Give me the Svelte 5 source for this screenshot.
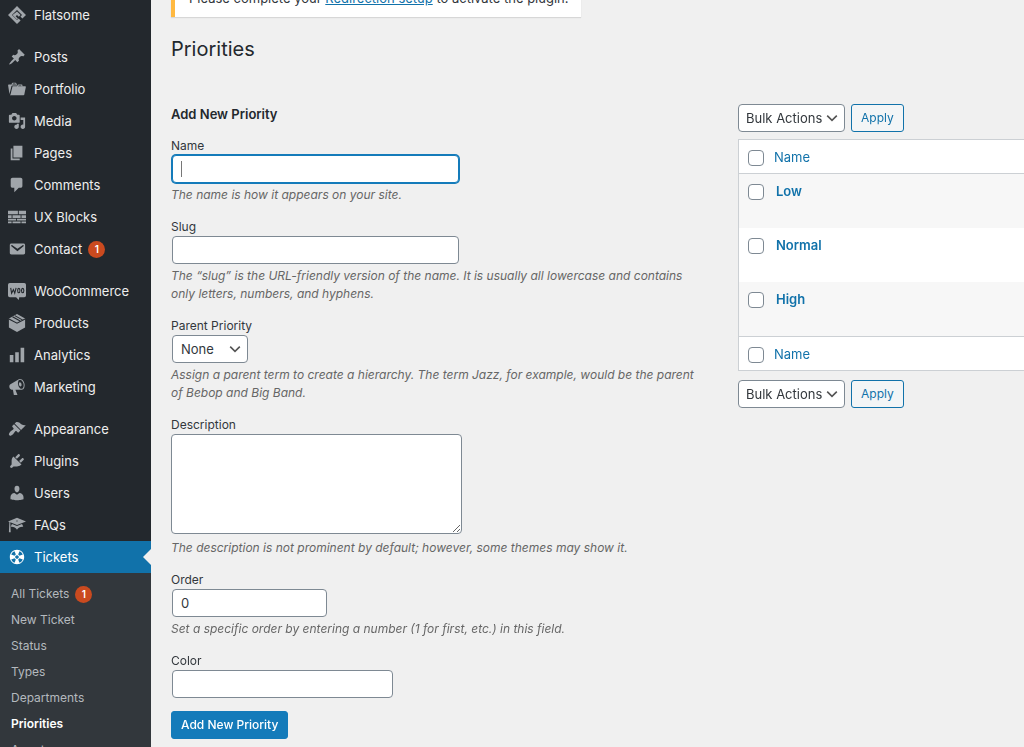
<script>
  import { onMount } from 'svelte'

  const groups = [
    [{ name: 'Flatsome', icon: 'flatsome' }],
    [
      { name: 'Posts', icon: 'pin' },
      { name: 'Portfolio', icon: 'portfolio' },
      { name: 'Media', icon: 'media' },
      { name: 'Pages', icon: 'pages' },
      { name: 'Comments', icon: 'comments' },
      { name: 'UX Blocks', icon: 'blocks' },
      { name: 'Contact', icon: 'email', count: 1 }
    ],
    [
      { name: 'WooCommerce', icon: 'woo' },
      { name: 'Products', icon: 'box' },
      { name: 'Analytics', icon: 'chart' },
      { name: 'Marketing', icon: 'megaphone' }
    ],
    [
      { name: 'Appearance', icon: 'brush' },
      { name: 'Plugins', icon: 'plug' },
      { name: 'Users', icon: 'user' },
      { name: 'FAQs', icon: 'learn' },
      { name: 'Tickets', icon: 'sos', current: true }
    ]
  ]

  const submenu = [
    { name: 'All Tickets', count: 1 },
    { name: 'New Ticket' },
    { name: 'Status' },
    { name: 'Types' },
    { name: 'Departments' },
    { name: 'Priorities', current: true },
    { name: 'Agents' }
  ]

  const icons = {
    flatsome: 'M10 0l10 10-4 4-2.2-2.2L15.6 10 10 4.4 4.4 10l5.6 5.6 1.800-1.800L14 16l-4 4L0 10zM10 6l4 4-2 2-2-2-1.500 1.500L11 14l-1 1-5-5z',
    pin: 'M10.440 3.020l1.820-1.820 6.360 6.350-1.830 1.820c-1.050-.68-2.480-.57-3.410.36l-.75.75c-.92.93-1.040 2.350-.35 3.410l-1.830 1.820-2.410-2.410-2.800 2.790c-.42.42-3.380 2.710-3.800 2.290s1.860-3.390 2.280-3.810l2.790-2.790L4.100 9.360l1.830-1.820c1.050.69 2.480.57 3.400-.36l.75-.75c.93-.92 1.050-2.350.36-3.410z',
    portfolio: 'M4 5H.78c-.37 0-.74.32-.69.84l1.560 9.990S3.500 8.470 3.860 6.700c.11-.53.61-.7.98-.7H10s-.7-2.080-.77-2.310C9.110 3.250 8.890 3 8.450 3H5.140c-.36 0-.7.23-.8.64C4.250 4.040 4 5 4 5zm4.880 0h-4s.42-1 .87-1h2.130c.48 0 1 1 1 1zM2.670 16.250c-.31.47-.76.75-1.260.75h15.730c.54 0 .92-.31 1.030-.83.44-2.190 1.680-8.440 1.680-8.440.07-.5-.3-.73-.62-.73H16V5.530c0-.16-.26-.53-.66-.53h-3.760c-.52 0-.87.58-.87.58L10 7H5.590c-.32 0-.63.19-.69.5 0 0-1.590 6.700-1.720 7.330-.07.37-.22.99-.51 1.420zM15.380 7H11s.58-1 1.130-1h2.290c.71 0 .96 1 .96 1z',
    media: 'M13 11V4c0-.55-.45-1-1-1h-1.670L9 1H5L3.670 3H2c-.55 0-1 .45-1 1v7c0 .55.45 1 1 1h10c.55 0 1-.45 1-1zM7 4.500c1.380 0 2.500 1.120 2.500 2.500S8.380 9.500 7 9.500 4.500 8.380 4.500 7 5.620 4.500 7 4.500zM14 6h5v10.500c0 1.380-1.120 2.500-2.500 2.500S14 17.880 14 16.500s1.120-2.500 2.500-2.500c.17 0 .34.02.5.05V9h-3V6zm-4 8.050V13h2v3.500c0 1.380-1.120 2.500-2.500 2.500S7 17.880 7 16.500 8.120 14 9.500 14c.17 0 .34.02.5.05z',
    pages: 'M6 15V2h10v13H6zm-1 1h8v2H3V5h2v11z',
    comments: 'M5 2h9c1.100 0 2 .9 2 2v7c0 1.100-.9 2-2 2h-2l-5 5v-5H5c-1.100 0-2-.9-2-2V4c0-1.100.9-2 2-2z',
    blocks: 'M0 3h11v4H0zM12 3h8v4h-8zM0 8h4v3H0zM5 8h9v3H5zM15 8h5v3h-5zM0 12h9v2H0zM10 12h10v2H10zM0 15h4v2H0zM5 15h9v2H5zM15 15h5v2h-5z',
    email: 'M3.870 4h13.250C18.370 4 19 4.590 19 5.790v8.420c0 1.190-.63 1.790-1.880 1.790H3.870c-1.250 0-1.880-.6-1.880-1.790V5.790c0-1.200.63-1.790 1.880-1.790zm6.620 8.600l6.740-5.530c.24-.2.43-.66.13-1.070-.29-.41-.82-.42-1.170-.17l-5.700 3.860L4.800 5.830c-.35-.25-.88-.24-1.170.17-.3.41-.11.87.13 1.070z',
    chart: 'M18 18V2h-4v16h4zm-6 0V7H8v11h4zm-6 0v-8H2v8h4z',
    megaphone: 'M18.150 5.940c.46 1.620.38 3.220-.02 4.480-.42 1.280-1.260 2.180-2.300 2.480-.16.06-.26.06-.4.06-.06.02-.12.02-.18.02-.06.02-.14.02-.22.02h-6.800l2.220 5.500c.02.14-.06.26-.14.34-.08.1-.24.16-.34.16H6.950c-.1 0-.26-.06-.34-.16-.08-.08-.16-.2-.14-.34l-1-5.500H4.250l-.02-.02c-.5.06-1.080-.18-1.540-.62s-.88-1.080-1.060-1.880c-.24-.8-.2-1.560-.02-2.200.18-.62.58-1.080 1.060-1.300l.02-.02 9-5.400c.1-.06.18-.1.24-.16.06-.04.14-.08.24-.12.16-.08.28-.12.5-.18 1.040-.3 2.240.1 3.220.98s1.840 2.240 2.260 3.860zm-2.580 5.980h-.02c.4-.1.74-.34 1.040-.7.58-.7.86-1.760.86-3.040 0-.64-.1-1.300-.28-1.980-.34-1.360-1.020-2.500-1.780-3.240s-1.680-1.100-2.460-.88c-.82.22-1.400.96-1.700 2-.32 1.040-.28 2.360.06 3.720.38 1.360 1 2.500 1.800 3.240.78.74 1.620 1.100 2.480.88zm-2.540-7.080c.22-.04.42-.02.62.04.38.16.76.48 1.020 1s.42 1.200.42 1.780c0 .3-.04.56-.12.8-.18.48-.44.84-.86.94-.34.1-.8-.06-1.140-.4s-.64-.86-.78-1.500c-.18-.62-.12-1.240.02-1.720s.48-.84.82-.94z',
    brush: 'M14.480 11.060L7.410 3.990l1.500-1.500c.5-.56 2.300-.47 3.510.32 1.210.8 1.430 1.280 2.910 2.100 1.180.64 2.450 1.260 4.450.85zm-.71.71L6.700 4.700 4.930 6.470c-.39.39-.39 1.020 0 1.410l1.060 1.060c.39.39.39 1.030 0 1.420-.6.6-1.430 1.110-2.210 1.690-.35.26-.7.53-1.010.84C1.430 14.230.4 16.080 1.400 17.070c.99 1 2.840-.03 4.180-1.360.31-.31.58-.66.85-1.020.57-.78 1.080-1.610 1.690-2.210.39-.39 1.020-.39 1.410 0l1.060 1.060c.39.39 1.020.39 1.410 0z',
    plug: 'M13.110 4.360L9.870 7.600 8 5.730l3.240-3.240c.35-.34 1.050-.2 1.560.32.52.51.66 1.210.31 1.550zm-8 1.770l.91-1.120 9.010 9.010-1.190.84c-.71.71-2.630 1.160-3.820 1.160H6.140L4.900 17.260c-.59.59-1.540.59-2.120 0-.59-.58-.59-1.530 0-2.120l1.240-1.240v-3.880c0-1.130.4-3.190 1.090-3.890zm7.260 3.970l3.240-3.240c.34-.35 1.040-.21 1.550.31.52.51.66 1.210.31 1.550l-3.240 3.250z',
    user: 'M10 9.250c-2.270 0-2.730-3.440-2.730-3.440C7 4.020 7.820 2 9.970 2c2.160 0 2.980 2.020 2.710 3.810 0 0-.41 3.440-2.680 3.440zm0 2.570L12.720 10c2.390 0 4.520 2.330 4.520 4.530v2.490s-3.650 1.130-7.240 1.130c-3.650 0-7.240-1.130-7.240-1.130v-2.490c0-2.250 1.940-4.480 4.470-4.480z',
    learn: 'M10 10L2.540 7.020 3 18H1l.48-11.410L0 6l10-4 10 4zm0-5c-.55 0-1 .22-1 .5s.45.5 1 .5 1-.22 1-.5-.45-.5-1-.5zm0 6l5.570-2.230c.71.94 1.200 2.070 1.360 3.300-.3-.04-.61-.07-.93-.07-2.550 0-4.780 1.370-6 3.410C8.780 13.370 6.550 12 4 12c-.32 0-.63.03-.93.07.16-1.230.65-2.360 1.360-3.300z',
    sos: 'M18 10c0-4.420-3.580-8-8-8s-8 3.580-8 8 3.580 8 8 8 8-3.580 8-8zM7.230 3.570L8.720 7.300c-.62.29-1.130.8-1.420 1.420L3.570 7.230c.71-1.640 2.020-2.950 3.660-3.660zm9.200 3.660L12.700 8.720c-.29-.62-.8-1.130-1.420-1.420l1.490-3.730c1.640.71 2.950 2.020 3.660 3.660zM10 12c-1.100 0-2-.9-2-2s.9-2 2-2 2 .9 2 2-.9 2-2 2zm-6.430.77l3.730-1.490c.29.62.8 1.130 1.420 1.420l-1.490 3.730c-1.640-.71-2.950-2.020-3.660-3.660zm9.200 3.660l-1.490-3.730c.62-.29 1.130-.8 1.420-1.420l3.730 1.490c-.71 1.640-2.020 2.950-3.660 3.660z'
  }

  const rows = ['Low', 'Normal', 'High']

  let nameInput

  onMount(() => nameInput.focus())
</script>

{#snippet bulkActions(position)}
  <div class="tablenav">
    <select aria-label="Bulk actions {position}">
      <option>Bulk Actions</option>
    </select>
    <button class="button">Apply</button>
  </div>
{/snippet}

<div class="admin">
  <nav class="menu">
    {#each groups as group}
      <ul class="group">
        {#each group as item}
          <li>
            <a class="item" class:current={item.current} href="#{item.icon}">
              <svg class="icon" viewBox="0 0 20 20" aria-hidden="true">
                {#if item.icon == 'woo'}
                  <path d="M2 1h16q2 0 2 2v12q0 2-2 2h-5.500l-.5 3-3-3H2q-2 0-2-2V3q0-2 2-2z" />
                  <path class="cut" d="M3 6.500l1 6 2-4 1.500 4 1.500-6" />
                  <ellipse class="cut" cx="12" cy="9.500" rx="1.300" ry="2.400" />
                  <ellipse class="cut" cx="16.300" cy="9.500" rx="1.300" ry="2.400" />
                {:else if item.icon == 'box'}
                  <path d="M10 0l9 5v10l-9 5-9-5V5z" />
                  <path class="cut" d="M1 5.500l9 4.700 9-4.700M5 3l8.500 4.800M7.500 1.800L16 6.500" />
                {:else}
                  <path fill-rule="evenodd" d={icons[item.icon]} />
                {/if}
              </svg>
              {item.name}
              {#if item.count}<span class="count">{item.count}</span>{/if}
            </a>
          </li>
        {/each}
      </ul>
    {/each}
    <ul class="submenu">
      {#each submenu as item}
        <li>
          <a class:current={item.current} href="#{item.name}">
            {item.name}
            {#if item.count}<span class="count">{item.count}</span>{/if}
          </a>
        </li>
      {/each}
    </ul>
  </nav>

  <main>
    <div class="notice">
      Please complete your <a href="#setup">Redirection setup</a> to activate the plugin.
    </div>
    <h1>Priorities</h1>

    <div class="columns">
      <form>
        <h2>Add New Priority</h2>
        <div class="field">
          <label for="name">Name</label>
          <input id="name" type="text" bind:this={nameInput} />
          <p>The name is how it appears on your site.</p>
        </div>
        <div class="field">
          <label for="slug">Slug</label>
          <input id="slug" type="text" />
          <p>The “slug” is the URL-friendly version of the name. It is usually all lowercase and contains only letters, numbers, and hyphens.</p>
        </div>
        <div class="field">
          <label for="parent">Parent Priority</label>
          <select id="parent">
            <option>None</option>
          </select>
          <p>Assign a parent term to create a hierarchy. The term Jazz, for example, would be the parent of Bebop and Big Band.</p>
        </div>
        <div class="field">
          <label for="description">Description</label>
          <textarea id="description"></textarea>
          <p>The description is not prominent by default; however, some themes may show it.</p>
        </div>
        <div class="field">
          <label for="order">Order</label>
          <input id="order" class="short" type="text" value="0" />
          <p>Set a specific order by entering a number (1 for first, etc.) in this field.</p>
        </div>
        <div class="field">
          <label for="color">Color</label>
          <input id="color" class="medium" type="text" />
        </div>
        <button class="button primary" type="button">Add New Priority</button>
      </form>

      <section class="list">
        {@render bulkActions('top')}
        <table>
          <thead>
            <tr>
              <td><input type="checkbox" aria-label="Select all" /></td>
              <th><a href="#sort">Name</a></th>
            </tr>
          </thead>
          <tbody>
            {#each rows as row}
              <tr>
                <td><input type="checkbox" aria-label="Select {row}" /></td>
                <th><a href="#{row}">{row}</a></th>
              </tr>
            {/each}
          </tbody>
          <tfoot>
            <tr>
              <td><input type="checkbox" aria-label="Select all" /></td>
              <th><a href="#sort">Name</a></th>
            </tr>
          </tfoot>
        </table>
        {@render bulkActions('bottom')}
      </section>
    </div>
  </main>
</div>

<style>
  :global(body) {
    background: #f0f0f0;
    color: #32373c;
    font: 13px/18px Inter, "Liberation Sans", sans-serif;
  }

  .admin {
    display: flex;
    height: 100vh;
    overflow: hidden;
  }

  a {
    color: #1172aa;
  }

  .menu {
    flex: 0 0 151px;
    background: #23282d;
    margin-top: -1px;
  }

  ul {
    list-style: none;
    margin: 0;
    padding: 0;
  }

  .group + .group {
    margin-top: 10px;
  }

  .item {
    display: flex;
    align-items: center;
    position: relative;
    height: 32px;
    padding-left: 8px;
    color: #eee;
    text-decoration: none;
  }

  .icon {
    width: 18px;
    height: 18px;
    margin-right: 8px;
    fill: #a0a5aa;
  }

  .cut {
    fill: none;
    stroke: #23282d;
    stroke-width: 1.2;
  }

  .item.current {
    background: #1172aa;
    color: #fff;
  }

  .item.current .icon {
    fill: #fff;
  }

  .item.current::after {
    content: "";
    position: absolute;
    right: 0;
    top: 8px;
    border: 8px solid transparent;
    border-left-width: 0;
    border-right-color: #f0f0f0;
  }

  .count {
    width: 17px;
    margin-left: 6px;
    border-radius: 9px;
    background: #ca4a1f;
    color: #fff;
    font-size: 10px;
    line-height: 17px;
    font-weight: 600;
    text-align: center;
  }

  .submenu {
    height: 100%;
    padding-top: 8px;
    background: #32373c;
  }

  .submenu a {
    display: flex;
    align-items: center;
    height: 26px;
    padding-left: 11px;
    color: #b4b9be;
    font-size: 12px;
    text-decoration: none;
  }

  .submenu .current {
    color: #fff;
    font-weight: 600;
  }

  main {
    flex: 1;
    min-width: 0;
    padding-left: 20px;
  }

  .notice {
    width: fit-content;
    margin-top: -20px;
    padding: 9px 12px 10px 14px;
    border-left: 4px solid #ffb941;
    background: #fff;
    box-shadow: 0 1px 1px rgba(0, 0, 0, .1);
  }

  h1 {
    margin: 18px 0 41px;
    color: #23282d;
    font-size: 20px;
    line-height: 28px;
    font-weight: 400;
  }

  .columns {
    display: flex;
  }

  form {
    flex: 0 1 527px;
    margin-right: 40px;
  }

  h2 {
    margin: 1px 0 13px;
    font-size: 13px;
    line-height: 18px;
    font-weight: 600;
    color: #23282d;
  }

  .field {
    margin-bottom: 13px;
  }

  label {
    display: block;
    padding-top: 1px;
    font-size: 12px;
  }

  .field p {
    margin: 3px 0 0;
    color: #666;
    font-size: 12px;
    font-style: italic;
  }

  input, select, textarea {
    box-sizing: border-box;
    border: 1px solid #7e8993;
    border-radius: 4px;
    background-color: #fff;
    color: #32373c;
    font: inherit;
  }

  input[type="text"] {
    display: block;
    width: 287px;
    height: 28px;
    margin: 0 1px;
    padding: 0 8px;
  }

  input[type="text"].short {
    width: 155px;
  }

  input[type="text"].medium {
    width: 221px;
  }

  input:focus {
    outline: none;
    border-color: #147bba;
    box-shadow: 0 0 0 1px #147bba;
  }

  /* steady caret in place of the blinking one */
  input[type="text"]:focus {
    caret-color: transparent;
    background-image: linear-gradient(#777, #777);
    background-repeat: no-repeat;
    background-position: 8px center;
    background-size: 1px 16px;
  }

  textarea {
    display: block;
    width: 291px;
    height: 100px;
    margin-bottom: 5px;
  }

  select {
    display: block;
    height: 28px;
    margin: 0 1px;
    padding: 0 20px 0 8px;
    appearance: none;
    background-image: url('data:image/svg+xml,<svg xmlns="http://www.w3.org/2000/svg" viewBox="0 0 20 20"><path d="M4 7l6 6 6-6" fill="none" stroke="%23555" stroke-width="2"/></svg>');
    background-repeat: no-repeat;
    background-position: right 4px center;
    background-size: 16px;
  }

  #parent {
    width: 76px;
  }

  .button {
    height: 28px;
    padding: 0 9px;
    border: 1px solid #1172aa;
    border-radius: 3px;
    background: #f3f5f6;
    color: #1172aa;
    font: inherit;
    font-size: 12px;
  }

  .primary {
    border-color: #147bba;
    background: #147bba;
    color: #fff;
    font-weight: 500;
  }

  .list {
    flex: 1;
  }

  .tablenav {
    display: flex;
    gap: 6px;
  }

  .tablenav select {
    width: 107px;
    margin: 0;
    padding-left: 7px;
  }

  table {
    width: 100%;
    margin: 7px 0 9px;
    border: 1px solid #ccd0d4;
    border-right: 0;
    border-spacing: 0;
    background: #fff;
  }

  td, th {
    padding: 8px 0 7px;
    text-align: left;
    vertical-align: top;
    font-weight: 400;
  }

  thead td, thead th {
    border-bottom: 1px solid #ccd0d4;
  }

  tfoot td, tfoot th {
    border-top: 1px solid #ccd0d4;
  }

  td {
    width: 26px;
    padding-left: 9px;
  }

  th a {
    text-decoration: none;
  }

  tbody tr {
    height: 54px;
  }

  tbody tr:nth-child(odd) {
    background: #f7f7f7;
  }

  tbody th {
    padding-left: 2px;
    font-weight: 600;
  }

  input[type="checkbox"] {
    display: block;
    appearance: none;
    width: 16px;
    height: 16px;
    margin: 2px 0 0;
  }
</style>
